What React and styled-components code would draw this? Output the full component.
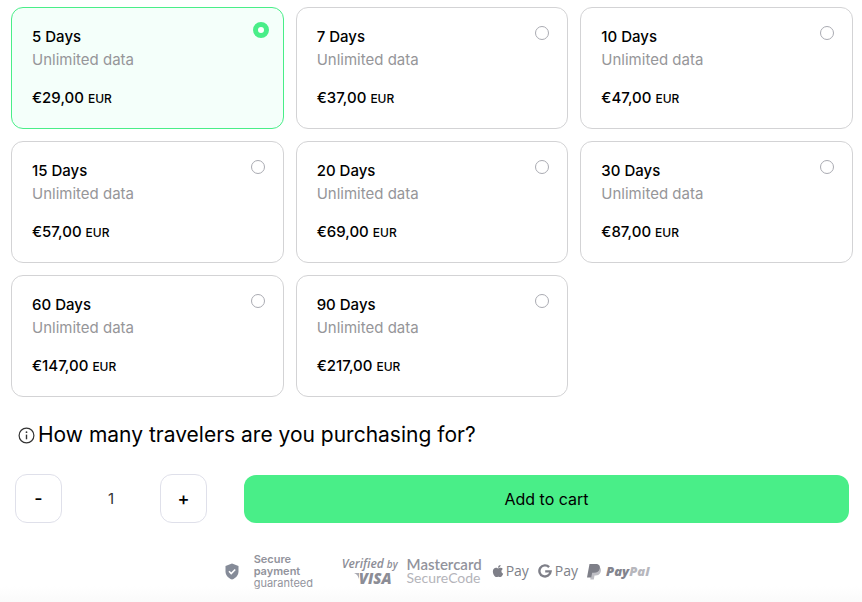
import React, { useState } from "react";
import styled, { createGlobalStyle } from "styled-components";
import { FaApple } from "react-icons/fa";

const GlobalStyle = createGlobalStyle`
  *, *::before, *::after { box-sizing: border-box; }
  body {
    margin: 0;
    background: #fff;
    color: #000;
    font-family: Inter, "Liberation Sans", sans-serif;
    font-size: 16px;
  }
  button, input { font: inherit; color: inherit; }
`;

const Page = styled.main`
  padding: 7px 9px 0 11px;
`;

const Plans = styled.fieldset`
  display: grid;
  grid-template-columns: repeat(3, minmax(0, 1fr));
  gap: 12px;
  margin: 0;
  padding: 0;
  border: 0;
`;

const PlanCard = styled.label`
  display: flex;
  justify-content: space-between;
  align-items: flex-start;
  padding: 14px 14px 16px 20px;
  border: 1px solid ${(p) => (p.$selected ? "#49ee88" : "#d3d3d5")};
  border-radius: 12px;
  background: ${(p) => (p.$selected ? "#f4fffa" : "#fff")};
  cursor: pointer;
`;

const PlanInfo = styled.span`
  display: flex;
  flex-direction: column;
  padding-top: 3px;
  font-size: 15px;
  line-height: 23px;
`;

const PlanName = styled.span`
  font-weight: 500;
`;

const PlanData = styled.span`
  color: #969699;
`;

const Price = styled.span`
  margin-top: 14px;
  font-weight: 500;
  line-height: 26px;
`;

const Currency = styled.small`
  font-size: 12px;
`;

const Radio = styled.input`
  appearance: none;
  flex: none;
  width: 14px;
  height: 14px;
  margin: 4px 4px 0 0;
  border: 1px solid #aaabb2;
  border-radius: 50%;
  background: #fff;

  &:checked {
    width: 16px;
    height: 16px;
    margin: 0;
    border: 5px solid #49ee88;
  }
`;

const Question = styled.h2`
  display: flex;
  align-items: center;
  gap: 3px;
  margin: 24px 0 0 7px;
  font-size: 21px;
  font-weight: 400;
  line-height: 28px;
`;

const PurchaseRow = styled.div`
  display: flex;
  align-items: center;
  gap: 37px;
  margin: 25px 4px 0;
`;

const Stepper = styled.div`
  display: flex;
  align-items: center;
`;

const StepButton = styled.button`
  width: 47px;
  height: 49px;
  padding: 0;
  border: 1px solid #dfe0ea;
  border-radius: 12px;
  background: #fff;
  font-size: 18px;
  font-weight: 500;
  cursor: pointer;
`;

const Quantity = styled.input`
  width: 98px;
  padding: 0;
  border: 0;
  background: transparent;
  color: #333;
  font-size: 15px;
  text-align: center;
`;

const CartButton = styled.button`
  flex: 1;
  height: 48px;
  border: 0;
  border-radius: 12px;
  background: #49ee88;
  cursor: pointer;
`;

const Trust = styled.footer`
  display: flex;
  justify-content: center;
  align-items: center;
  height: 79px;
  padding: 17px 0 0 12px;
  margin: 0 -9px 0 -11px;
  background: linear-gradient(#fff 80%, #fafafa);
  color: #92939c;
`;

const Secure = styled.div`
  display: flex;
  align-items: center;
  gap: 15px;
  margin-right: 30px;
  font-size: 11px;
  line-height: 12px;
`;

const SecureText = styled.span`
  width: 58px;
`;

const SecureTitle = styled.span`
  font-weight: 600;
`;

const Logos = styled.div`
  display: flex;
  align-items: center;
  gap: 9px;

  svg { flex: none; display: block; }
`;

const Verified = styled.span`
  display: flex;
  flex-direction: column;
  color: #8c8d96;
  font-family: "Open Sans", sans-serif;
  font-size: 12px;
  font-style: italic;
  font-weight: 600;
  line-height: 14px;
  white-space: nowrap;
`;

const VerifiedTop = styled.span`
  display: flex;
  align-items: baseline;
  gap: 3px;
`;

const VerifiedBy = styled.span`
  font-size: 10px;
`;

const Visa = styled.span`
  display: flex;
  align-self: flex-end;
  padding-right: 6px;
  font-size: 15px;
  font-weight: 800;
`;

const SecureCode = styled.span`
  display: flex;
  flex-direction: column;
  color: #b4b4ba;
  font-family: Lato, sans-serif;
  font-size: 14px;
  line-height: 14px;
`;

const Mastercard = styled.span`
  color: #92939c;
  font-size: 15px;
  font-weight: 600;
`;

const Pay = styled.span`
  display: flex;
  align-items: center;
  gap: ${(p) => p.$gap}px;
  color: #7e7f88;
  font-family: "Open Sans", sans-serif;
  font-size: 14px;
  line-height: 20px;
`;

const PayPal = styled.span`
  display: flex;
  align-items: center;
  color: #83848d;
  font-family: "Open Sans", sans-serif;
  font-size: 13px;
  font-style: italic;
  font-weight: 800;

  svg { margin-right: 4px; }
`;

const Pal = styled.span`
  color: #b7b7bd;
`;

const plans = [
  [5, "29"], [7, "37"], [10, "47"], [15, "57"],
  [20, "69"], [30, "87"], [60, "147"], [90, "217"],
];

function InfoIcon() {
  return (
    <svg width="17" height="17" viewBox="0 0 17 17" fill="none" stroke="#333" aria-hidden="true">
      <circle cx="8.5" cy="8.5" r="7.4" strokeWidth="1.2" />
      <path d="M8.5 7.6v4.7" strokeWidth="1.4" />
      <circle cx="8.5" cy="5.2" r=".9" fill="#333" stroke="none" />
    </svg>
  );
}

function ShieldIcon() {
  return (
    <svg width="14" height="17" viewBox="0 0 14 17" aria-hidden="true">
      <path d="M7 .5 13.5 3v5.2c0 3.7-2.3 6.7-6.5 8.3C2.8 14.9.5 11.9.5 8.2V3z" fill="#858b98" />
      <path d="m4 8.3 2.2 2.2 4-4" fill="none" stroke="#fff" strokeWidth="1.6" />
    </svg>
  );
}

function VisaWing() {
  return (
    <svg width="5" height="14" viewBox="0 0 5 14" aria-hidden="true">
      <path d="M0 2h5v6C4 5 3 3 0 2z" fill="#aaaab2" />
    </svg>
  );
}

function GoogleG() {
  return (
    <svg width="14" height="14" viewBox="0 0 14 14" fill="none" stroke="#7e7f88" strokeWidth="2.4" aria-hidden="true">
      <path d="M11.1 3.1A5.6 5.6 0 1 0 12.6 7.4H7.2" />
    </svg>
  );
}

function PayPalMark() {
  return (
    <svg width="15" height="17" viewBox="0 0 15 17" aria-hidden="true">
      <path d="M5 4h7.5c1.5 1.2 1.8 3 1.2 5-.8 2.500-2.700 3.500-5.200 3.500h-1L6.800 16.500H3.300z" fill="#bebec4" />
      <path d="M2.500 1h6.300c3 0 4.600 1.700 4 4.500C12.200 8.500 10 9.800 7 9.800H5.200l-1 4.700H0z" fill="#7e7f88" />
    </svg>
  );
}

export default function App() {
  const [selected, setSelected] = useState(5);
  const [quantity, setQuantity] = useState(1);

  return (
    <>
      <GlobalStyle />
      <Page>
        <Plans aria-label="Plan">
          {plans.map(([days, price]) => (
            <PlanCard key={days} $selected={selected === days}>
              <PlanInfo>
                <PlanName>{days} Days</PlanName>
                <PlanData>Unlimited data</PlanData>
                <Price>€{price},00 <Currency>EUR</Currency></Price>
              </PlanInfo>
              <Radio type="radio" name="plan" value={days} checked={selected === days} onChange={() => setSelected(days)} />
            </PlanCard>
          ))}
        </Plans>
        <Question id="travelers"><InfoIcon />How many travelers are you purchasing for?</Question>
        <PurchaseRow>
          <Stepper>
            <StepButton type="button" aria-label="Fewer travelers" onClick={() => setQuantity(Math.max(1, quantity - 1))}>-</StepButton>
            <Quantity aria-labelledby="travelers" inputMode="numeric" value={quantity} onChange={(e) => setQuantity(Number(e.target.value) || 1)} />
            <StepButton type="button" aria-label="More travelers" onClick={() => setQuantity(quantity + 1)}>+</StepButton>
          </Stepper>
          <CartButton type="button">Add to cart</CartButton>
        </PurchaseRow>
        <Trust>
          <Secure>
            <ShieldIcon />
            <SecureText><SecureTitle>Secure payment</SecureTitle> guaranteed</SecureText>
          </Secure>
          <Logos>
            <Verified>
              <VerifiedTop>Verified <VerifiedBy>by</VerifiedBy></VerifiedTop>
              <Visa><VisaWing />VISA</Visa>
            </Verified>
            <SecureCode><Mastercard>Mastercard</Mastercard>SecureCode</SecureCode>
            <Pay $gap={1}><FaApple size={14} aria-hidden="true" />Pay</Pay>
            <Pay $gap={3}><GoogleG />Pay</Pay>
            <PayPal><PayPalMark />Pay<Pal>Pal</Pal></PayPal>
          </Logos>
        </Trust>
      </Page>
    </>
  );
}
